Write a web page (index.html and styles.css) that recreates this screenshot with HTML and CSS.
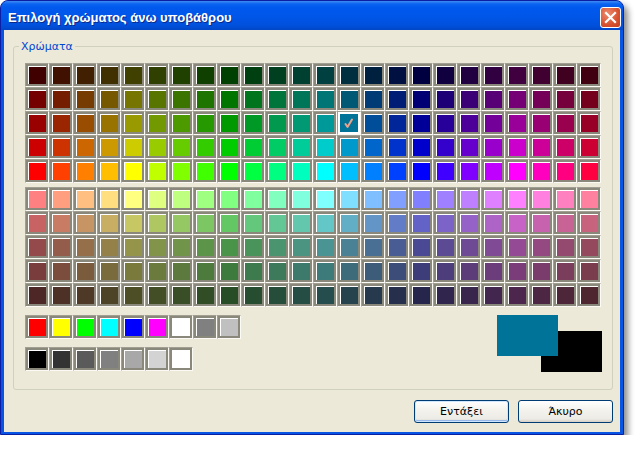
FILE: index.html
```html
<!DOCTYPE html>
<html lang="el">
<head>
    <meta charset="UTF-8">
    <title>Επιλογή χρώματος άνω υποβάθρου</title>
    <link rel="stylesheet" href="styles.css">
</head>
<body>
    <div class="window">
        <div class="titlebar">
            <span class="title">Επιλογή χρώματος άνω υποβάθρου</span>
            <button class="close" type="button">
                <svg width="13" height="13" viewBox="0 0 13 13">
                    <path d="M2 2 L11 11 M11 2 L2 11" stroke="#fff" stroke-width="2.2" stroke-linecap="square"/>
                </svg>
            </button>
        </div>
        <div class="client">
            <fieldset class="colors">
                <legend>Χρώματα</legend>
                <div class="palette" id="bright"></div>
                <div class="palette soft" id="soft"></div>
                <div class="bottom">
                    <div class="basics">
                        <div class="row" id="basic"></div>
                        <div class="row" id="grays"></div>
                    </div>
                    <div class="preview">
                        <div class="swatch-old"></div>
                        <div class="swatch-new"></div>
                    </div>
                </div>
            </fieldset>
            <div class="buttons">
                <button class="btn default" type="button">Εντάξει</button>
                <button class="btn" type="button">Άκυρο</button>
            </div>
        </div>
    </div>
    <script>
        function hsv(h, s, v) {
            const f = (n) => {
                const k = (n + h / 60) % 6;
                return v - v * s * Math.max(0, Math.min(k, 4 - k, 1));
            };
            return 'rgb(' + [f(5), f(3), f(1)].map(x => Math.round(x * 255)).join(',') + ')';
        }

        function makeCell(color, selected) {
            const cell = document.createElement('div');
            cell.className = selected ? 'cell selected' : 'cell';
            const inner = document.createElement('i');
            inner.style.background = color;
            if (selected) {
                inner.innerHTML = '<svg width="12" height="12" viewBox="0 0 12 12"><path d="M2.5 7 L4.5 10 L9 2.5" fill="none" stroke="#e9a48e" stroke-width="2" stroke-linecap="round" stroke-linejoin="round"/></svg>';
            }
            cell.appendChild(inner);
            return cell;
        }

        const bright = document.getElementById('bright');
        [0.25, 0.46, 0.6, 0.8, 1].forEach((v, row) => {
            for (let c = 0; c < 24; c++) {
                bright.appendChild(makeCell(hsv(c * 15, 1, v), row === 2 && c === 13));
            }
        });

        const soft = document.getElementById('soft');
        [1, 0.78, 0.58, 0.48, 0.3].forEach(v => {
            for (let c = 0; c < 24; c++) {
                soft.appendChild(makeCell(hsv(c * 15, 0.5, v), false));
            }
        });

        const basic = ['#ff0000', '#ffff00', '#00ff00', '#00ffff', '#0000ff', '#ff00ff', '#ffffff', '#808080', '#c0c0c0'];
        const grays = ['#000000', '#333333', '#5a5a5a', '#808080', '#a8a8a8', '#d3d3d3', '#ffffff'];
        basic.forEach(c => document.getElementById('basic').appendChild(makeCell(c, false)));
        grays.forEach(c => document.getElementById('grays').appendChild(makeCell(c, false)));
    </script>
</body>
</html>
```
FILE: styles.css
```css
body {
    margin: 0;
    background-color: #fff;
    font-family: "DejaVu Sans", sans-serif;
    font-size: 11px;
}
.window {
    width: 624px;
    height: 435px;
    box-sizing: border-box;
    display: flex;
    flex-direction: column;
    background-color: #0855e4;
    border: 1px solid #0a1fa3;
    border-radius: 8px 8px 0 0;
    box-shadow: 4px 5px 6px rgba(0,0,0,0.45);
}
.titlebar {
    height: 29px;
    display: flex;
    align-items: center;
    justify-content: space-between;
    padding: 3px 2px 0 7px;
    box-sizing: border-box;
    border-radius: 7px 7px 0 0;
    background: linear-gradient(#3f8cf3 0, #0a63f0 3px, #0058ee 7px, #0056e8 55%, #0050dc 85%, #0046c6 100%);
}
.title {
    color: #fff;
    font-family: "Liberation Sans", sans-serif;
    font-weight: bold;
    font-size: 13px;
    text-shadow: 1px 1px 0 #0a2a8a;
}
.close {
    width: 21px;
    height: 21px;
    padding: 0;
    display: flex;
    align-items: center;
    justify-content: center;
    border: 1px solid #fff;
    border-radius: 3px;
    background: radial-gradient(circle at 35% 30%, #ec8c6e 0, #d8512f 60%, #c1401f 100%);
}
.client {
    flex: 1;
    margin: 0 3px 2px 3px;
    padding: 10px 7px 0 9px;
    background-color: #ece9d8;
}
.colors {
    margin: 0;
    padding: 0 11px 17px 11px;
    border: 1px solid #d0d0bf;
    border-radius: 3px;
}
.colors legend {
    margin-left: -6px;
    padding: 0 2px;
    line-height: 13px;
    color: #0046d5;
}
.palette {
    display: grid;
    grid-template-columns: repeat(24, 24px);
    grid-auto-rows: 24px;
    margin-top: 10px;
}
.palette.soft {
    margin-top: 4px;
}
.cell {
    width: 24px;
    height: 24px;
    box-sizing: border-box;
    border: 1px solid;
    border-color: #a19f91 #fbfaf4 #fbfaf4 #a19f91;
}
.cell i {
    display: flex;
    align-items: center;
    justify-content: center;
    height: 100%;
    box-sizing: border-box;
    border: 2px solid #8a887b;
    box-shadow: inset 1px 1px 0 #fff;
}
.cell.selected i {
    border-color: #fff;
    box-shadow: none;
}
.bottom {
    display: flex;
    align-items: flex-start;
    margin-top: 8px;
}
.basics {
    display: flex;
    flex-direction: column;
    gap: 8px;
}
.row {
    display: flex;
}
.preview {
    position: relative;
    width: 105px;
    height: 57px;
    margin-left: auto;
    margin-right: -1px;
}
.swatch-old {
    position: absolute;
    right: 0;
    bottom: 0;
    width: 61px;
    height: 41px;
    background-color: #000;
}
.swatch-new {
    position: absolute;
    left: 0;
    top: 0;
    width: 61px;
    height: 41px;
    background-color: #007399;
}
.buttons {
    display: flex;
    justify-content: flex-end;
    gap: 9px;
    margin-top: 10px;
}
.btn {
    width: 95px;
    height: 23px;
    padding: 0;
    font-family: "DejaVu Sans", sans-serif;
    font-size: 11px;
    color: #000;
    border: 1px solid #003c74;
    border-radius: 3px;
    background: linear-gradient(#ffffff 0, #f4f3ee 40%, #ecebe6 85%, #d6d0c5 100%);
}
.btn.default {
    box-shadow: inset 0 0 0 1px #cee7ff, inset 0 -1px 0 1px #98b8ea;
}
```
